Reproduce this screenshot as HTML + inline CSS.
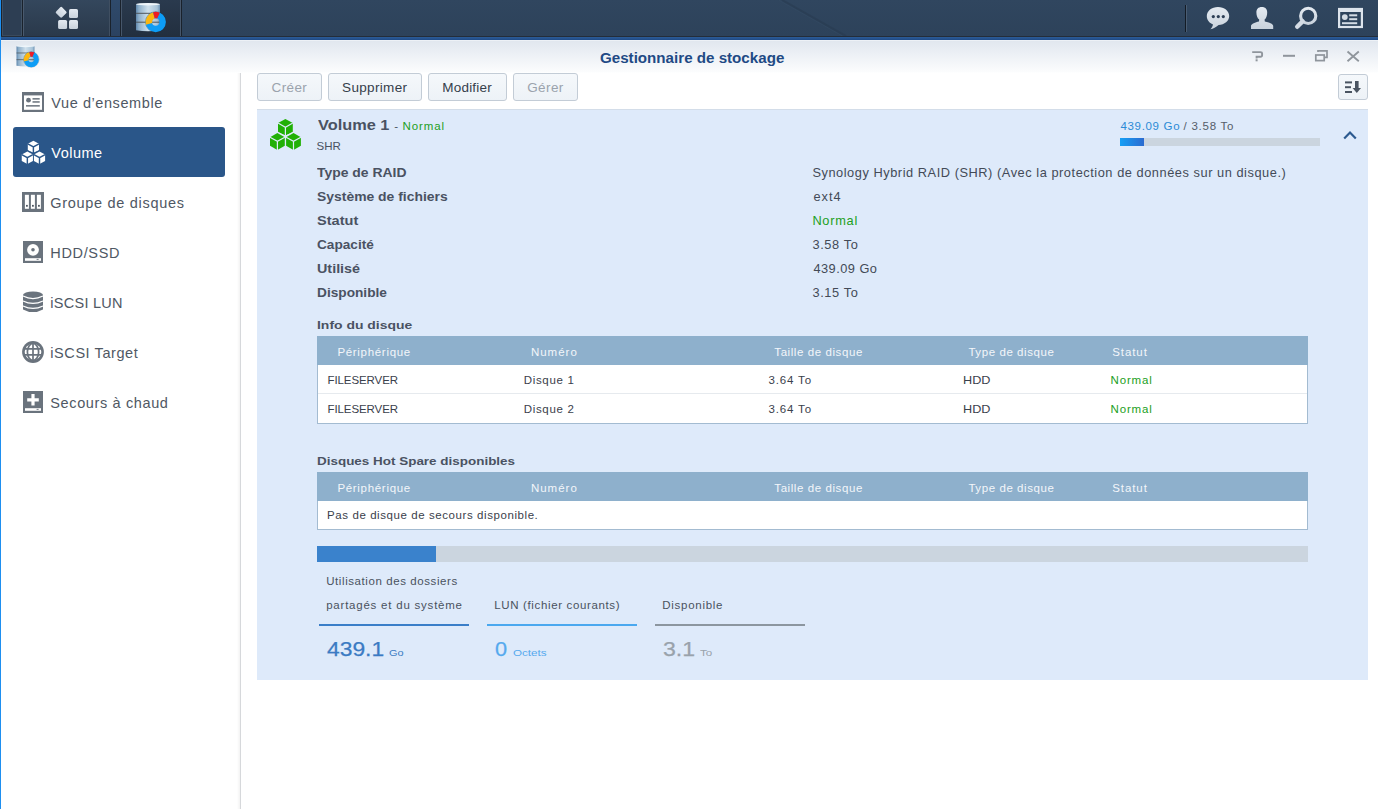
<!DOCTYPE html>
<html><head><meta charset="utf-8"><title>Gestionnaire de stockage</title>
<style>
*{margin:0;padding:0;box-sizing:border-box}
html,body{width:1378px;height:809px;overflow:hidden;background:#fff;font-family:"Liberation Sans",sans-serif}
.a{position:absolute}
.t{position:absolute;white-space:nowrap}
</style></head><body>

<div class="a" style="left:0;top:0;width:1378px;height:36px;background:linear-gradient(#30465f,#2d425a)"></div>
<svg class="a" style="left:0;top:0" width="1378" height="36"><path d="M782 0L846 36" stroke="#283a4f" stroke-width="2" opacity="0.5"/><path d="M778.5 0L842.5 36" stroke="#3a5069" stroke-width="0.8" opacity="0.4"/></svg>
<div class="a" style="left:0;top:36px;width:1378px;height:1px;background:#242d39"></div>
<div class="a" style="left:0;top:37px;width:1378px;height:3px;background:linear-gradient(#2c5c97,#1f4a86)"></div>
<div class="a" style="left:1px;top:0;width:1px;height:36px;background:#1b232d"></div>
<div class="a" style="left:2px;top:0;width:20px;height:36px;background:#2d3e53;border-left:1px solid #3f5064;border-right:1px solid #3f5266;border-bottom:1px solid #3a4a5c"></div>
<div class="a" style="left:22px;top:0;width:1px;height:36px;background:#1a222c"></div>
<div class="a" style="left:23px;top:0;width:87px;height:36px;background:linear-gradient(#34475d,#2a394b);border-left:1px solid #4a5a6e;border-right:1px solid #404f61"></div>
<div class="a" style="left:110px;top:0;width:1px;height:36px;background:#1a222c"></div>
<div class="a" style="left:111px;top:0;width:9px;height:36px;background:linear-gradient(#2f4a6b,#2b4260)"></div>
<div class="a" style="left:120px;top:0;width:1px;height:36px;background:#1a222c"></div>
<div class="a" style="left:121px;top:0;width:60px;height:36px;background:linear-gradient(#2a3a4e,#222f3f);border-left:1px solid #46566a;border-right:1px solid #46566a"></div>
<div class="a" style="left:181px;top:0;width:1px;height:36px;background:#1a222c"></div>
<div class="a" style="left:1185px;top:5px;width:1px;height:27px;background:#131b25"></div>
<div class="a" style="left:1186px;top:5px;width:1px;height:27px;background:#4a5d73"></div>
<!-- main menu icon -->
<svg class="a" style="left:52px;top:5px" width="30" height="28" viewBox="0 0 30 28">
 <defs><linearGradient id="ig" x1="0" y1="0" x2="0" y2="1"><stop offset="0" stop-color="#e4eaf1"/><stop offset="1" stop-color="#c9d2dc"/></linearGradient></defs>
 <rect x="5.2" y="3" width="8.4" height="8.4" rx="1.3" transform="rotate(45 9.1 7)" fill="url(#ig)"/>
 <rect x="17" y="3.9" width="9" height="9.2" rx="1.6" fill="url(#ig)"/>
 <rect x="6.1" y="15" width="9" height="9" rx="1.6" fill="url(#ig)"/>
 <rect x="17" y="15" width="9" height="9" rx="1.6" fill="url(#ig)"/>
</svg>
<!-- app icon taskbar -->
<svg class="a" style="left:130px;top:0px" width="42" height="36" viewBox="0 0 42 36">
 <defs>
  <linearGradient id="cylt" x1="0" y1="0" x2="1" y2="0"><stop offset="0" stop-color="#5f87ad"/><stop offset="0.12" stop-color="#8fb0cb"/><stop offset="0.5" stop-color="#cfe0ec"/><stop offset="0.88" stop-color="#a9c4d9"/><stop offset="1" stop-color="#6d93b5"/></linearGradient>
 </defs>
 <path d="M6 4.2Q18 2.6 30 4.2V30.2Q18 32.2 6 30.2Z" fill="url(#cylt)"/>
 <ellipse cx="18" cy="4.2" rx="12" ry="1.3" fill="#eef5fa"/>
 <path d="M6 13.3H30M6 22.2H30" stroke="#4f565c" stroke-width="1"/>
 <circle cx="25.7" cy="22" r="10.3" fill="none" stroke="#1b2a3a" stroke-width="0.9" opacity="0.35"/>
 <circle cx="25.7" cy="22" r="6.95" fill="none" stroke="#0d9df6" stroke-width="6.5"/>
 <path d="M19.01 23.87A6.95 6.95 0 0 1 23.90 15.29" fill="none" stroke="#fdb60f" stroke-width="6.5"/>
 <path d="M23.90 15.29A6.95 6.95 0 0 1 28.53 15.65" fill="none" stroke="#ee1c25" stroke-width="6.5"/>
</svg>
<!-- right icons -->
<svg class="a" style="left:1205px;top:5px" width="26" height="26" viewBox="0 0 26 26">
 <path d="M13 2C19.3 2 24.2 5.9 24.2 11C24.2 16 19.5 19.7 13.6 20C11 22.3 8.3 23.7 5.4 24.2C6.8 22.7 7.7 21.2 8 19.4C4.2 18 1.8 14.8 1.8 11C1.8 5.9 6.7 2 13 2Z" fill="url(#ig)"/>
 <circle cx="8.3" cy="11.6" r="1.6" fill="#2c3e55"/><circle cx="13.3" cy="11.6" r="1.6" fill="#2c3e55"/><circle cx="18.3" cy="11.6" r="1.6" fill="#2c3e55"/>
</svg>
<svg class="a" style="left:1249px;top:5px" width="26" height="26" viewBox="0 0 26 26">
 <path d="M12.8 2C16.4 2 18.2 4.2 18.2 7.4C18.2 10.6 17.2 13.2 15.6 14.6L15.8 16.4C19.6 17.2 23.8 18.6 24.2 20.8L24.2 24H2L2 20.8C2.4 18.6 6.3 17.2 10 16.4L10.2 14.6C8.5 13.2 7.4 10.6 7.4 7.4C7.4 4.2 9.2 2 12.8 2Z" fill="url(#ig)"/>
</svg>
<svg class="a" style="left:1293px;top:5px" width="26" height="26" viewBox="0 0 26 26">
 <circle cx="15.2" cy="10.9" r="7.6" fill="none" stroke="url(#ig)" stroke-width="3.1"/>
 <path d="M9.6 16.4L4.2 21.8" stroke="#d3dbe4" stroke-width="4.4" stroke-linecap="round"/>
</svg>
<svg class="a" style="left:1337px;top:6px" width="27" height="24" viewBox="0 0 27 24">
 <rect x="2.1" y="3" width="22.8" height="18" fill="none" stroke="#dde4ec" stroke-width="2.2"/>
 <rect x="1" y="2" width="25" height="4" fill="#dde4ec"/>
 <circle cx="7.8" cy="11.1" r="2.9" fill="#d3dbe4"/>
 <rect x="12.2" y="8.3" width="8" height="2" fill="#d3dbe4"/>
 <rect x="12.2" y="12.2" width="8" height="2" fill="#d3dbe4"/>
 <rect x="5" y="16.2" width="15.2" height="2" fill="#d3dbe4"/>
</svg>


<div class="a" style="left:0;top:0;width:1px;height:809px;background:#1e8ff0"></div>
<div class="a" style="left:1px;top:40px;width:1377px;height:1px;background:#edf1f6"></div>
<div class="a" style="left:1px;top:41px;width:1377px;height:32px;background:linear-gradient(#e1e7ef,#fbfcfd 95%,#fff)"></div>
<!-- window controls -->
<svg class="a" style="left:1248px;top:48px" width="120" height="16" viewBox="0 0 120 16">
 <g fill="none" stroke="#8f959c" stroke-width="1.9">
  <path d="M4.2 4.1H12.4Q14.1 4.1 14.1 5.6V7.2Q14.1 8.7 12.4 8.7H8.6V10.4"/>
 </g>
 <rect x="7.6" y="11.3" width="2" height="2" fill="#8f959c"/>
 <rect x="35" y="6.8" width="12" height="2" fill="#8f959c"/>
 <g fill="none" stroke="#8f959c" stroke-width="1.7">
  <rect x="67.8" y="7" width="8.4" height="5.6"/>
  <path d="M70 4V2.9H79V9.4H76.5"/>
 </g>
 <path d="M99.5 3.5L110.8 13.2M110.8 3.5L99.5 13.2" stroke="#8f959c" stroke-width="1.8"/>
</svg>
<svg class="a" style="left:11.9px;top:42.6px" width="31.5" height="27.0" viewBox="0 0 42 36">
 <defs>
  <linearGradient id="cylw" x1="0" y1="0" x2="1" y2="0"><stop offset="0" stop-color="#5f87ad"/><stop offset="0.12" stop-color="#8fb0cb"/><stop offset="0.5" stop-color="#cfe0ec"/><stop offset="0.88" stop-color="#a9c4d9"/><stop offset="1" stop-color="#6d93b5"/></linearGradient>
 </defs>
 <path d="M6 4.2Q18 2.6 30 4.2V30.2Q18 32.2 6 30.2Z" fill="url(#cylw)"/>
 <ellipse cx="18" cy="4.2" rx="12" ry="1.3" fill="#eef5fa"/>
 <path d="M6 13.3H30M6 22.2H30" stroke="#4f565c" stroke-width="1"/>
 <circle cx="25.7" cy="22" r="10.3" fill="none" stroke="#1b2a3a" stroke-width="0.9" opacity="0.35"/>
 <circle cx="25.7" cy="22" r="6.95" fill="none" stroke="#0d9df6" stroke-width="6.5"/>
 <path d="M19.01 23.87A6.95 6.95 0 0 1 23.90 15.29" fill="none" stroke="#fdb60f" stroke-width="6.5"/>
 <path d="M23.90 15.29A6.95 6.95 0 0 1 28.53 15.65" fill="none" stroke="#ee1c25" stroke-width="6.5"/>
</svg>
<!-- sidebar separator -->
<div class="a" style="left:237px;top:73px;width:3px;height:736px;background:linear-gradient(90deg,#fff,#f3f3f3)"></div>
<div class="a" style="left:240px;top:73px;width:1px;height:736px;background:#d6d8db"></div>
<!-- selected item -->
<div class="a" style="left:13px;top:127px;width:212px;height:50px;background:#2a5689;border-radius:3px"></div>


<svg class="a" style="left:22px;top:92px" width="22" height="20" viewBox="0 0 22 20">
 <rect x="0" y="0" width="22" height="20" fill="#6a737d"/>
 <rect x="2" y="3.4" width="18" height="14.4" fill="#fff"/>
 <circle cx="6.5" cy="8.2" r="2.4" fill="#6a737d"/>
 <rect x="10.5" y="6.1" width="7.2" height="1.5" fill="#6a737d"/>
 <rect x="10.5" y="9.2" width="7.2" height="1.5" fill="#6a737d"/>
 <rect x="4" y="13.1" width="13.8" height="1.5" fill="#6a737d"/>
</svg>
<svg class="a" style="left:21.14px;top:140.14px" width="24.95" height="24.95" viewBox="-1 -1 33 33"><path d="M15.4 0L22.8 4.1V12.7L15.4 16.799999999999997L8.0 12.7V4.1Z" fill="#fff"/><path d="M8.0 4.1L15.4 8.2L22.8 4.1M15.4 8.2V16.799999999999997" fill="none" stroke="#2a5689" stroke-width="1.9"/><path d="M-1.0 17.7L7.4 14.0L15.8 17.7" fill="none" stroke="#2a5689" stroke-width="3.04"/><path d="M7.4 14.1L14.8 18.2V26.799999999999997L7.4 30.9L0.0 26.799999999999997V18.2Z" fill="#fff"/><path d="M0.0 18.2L7.4 22.299999999999997L14.8 18.2M7.4 22.299999999999997V30.9" fill="none" stroke="#2a5689" stroke-width="1.9"/><path d="M15.100000000000001 17.7L23.5 14.0L31.9 17.7" fill="none" stroke="#2a5689" stroke-width="3.04"/><path d="M23.5 14.1L30.9 18.2V26.799999999999997L23.5 30.9L16.1 26.799999999999997V18.2Z" fill="#fff"/><path d="M16.1 18.2L23.5 22.299999999999997L30.9 18.2M23.5 22.299999999999997V30.9" fill="none" stroke="#2a5689" stroke-width="1.9"/></svg>
<svg class="a" style="left:22px;top:192px" width="22" height="20" viewBox="0 0 22 20">
 <rect x="0" y="0" width="22" height="20" fill="#6a737d"/>
 <rect x="2.9" y="2.8" width="4" height="14" fill="#fff"/>
 <rect x="8.9" y="2.8" width="4" height="14" fill="#fff"/>
 <rect x="14.9" y="2.8" width="4" height="14" fill="#fff"/>
 <rect x="4" y="12.9" width="1.8" height="1.8" fill="#4f5862"/>
 <rect x="10" y="12.9" width="1.8" height="1.8" fill="#4f5862"/>
 <rect x="16" y="12.9" width="1.8" height="1.8" fill="#4f5862"/>
</svg>
<svg class="a" style="left:23px;top:241px" width="20" height="22" viewBox="0 0 20 22">
 <rect x="0" y="0" width="20" height="22" fill="#6a737d"/>
 <circle cx="10" cy="8.8" r="5.9" fill="#fff"/>
 <circle cx="10" cy="8.8" r="1.8" fill="#6a737d"/>
 <rect x="2" y="17.2" width="16" height="2.6" fill="#fff"/>
 <rect x="13.6" y="17.9" width="2" height="0.9" fill="#6a737d"/>
</svg>
<svg class="a" style="left:22px;top:291px" width="22" height="22" viewBox="0 0 22 22">
 <path d="M1 4.2V18.4Q11 23.8 21 18.4V4.2Z" fill="#6a737d"/>
 <ellipse cx="11" cy="4" rx="10" ry="3.6" fill="#6a737d"/>
 <g fill="none" stroke="#fff" stroke-width="1.1">
  <path d="M1 5.1Q11 10.1 21 5.1M1 9.9Q11 14.9 21 9.9M1 14.9Q11 19.9 21 14.9"/>
 </g>
</svg>
<svg class="a" style="left:22px;top:341px" width="22" height="22" viewBox="0 0 22 22">
 <circle cx="11" cy="11" r="10.9" fill="#6a737d"/>
 <circle cx="11" cy="11" r="8.3" fill="#fff"/>
 <g fill="none" stroke="#6a737d" stroke-width="1.7">
  <ellipse cx="11" cy="11" rx="5.6" ry="8.6"/>
  <path d="M11 2V20M2 7.9H20M2 13.9H20"/>
 </g>
</svg>
<svg class="a" style="left:23px;top:391px" width="20" height="22" viewBox="0 0 20 22">
 <rect x="0" y="0" width="20" height="22" fill="#6a737d"/>
 <path d="M8.4 3H11.6V7.2H15.8V10.4H11.6V14.6H8.4V10.4H4.2V7.2H8.4Z" fill="#fff"/>
 <rect x="2" y="17.2" width="16" height="2.6" fill="#fff"/>
 <rect x="13.6" y="17.9" width="2" height="0.9" fill="#6a737d"/>
</svg>


<div class="a" style="left:257px;top:73px;width:65px;height:28px;background:linear-gradient(#f5f8fb,#edf2f7);border:1px solid #c3ccd6;border-radius:3px"></div><div class="a" style="left:328px;top:73px;width:94px;height:28px;background:linear-gradient(#f5f8fb,#edf2f7);border:1px solid #c3ccd6;border-radius:3px"></div><div class="a" style="left:428px;top:73px;width:79px;height:28px;background:linear-gradient(#f5f8fb,#edf2f7);border:1px solid #c3ccd6;border-radius:3px"></div><div class="a" style="left:513px;top:73px;width:65px;height:28px;background:linear-gradient(#f5f8fb,#edf2f7);border:1px solid #c3ccd6;border-radius:3px"></div>
<div class="a" style="left:1338px;top:74px;width:30px;height:26px;background:linear-gradient(#f5f8fb,#edf2f7);border:1px solid #c3ccd6;border-radius:3px"></div>
<svg class="a" style="left:1344px;top:80px" width="20" height="14" viewBox="0 0 20 14">
 <g fill="#4a5461"><rect x="1" y="1.4" width="7" height="2"/><rect x="1" y="6.2" width="6" height="2"/><rect x="1" y="11" width="7" height="2"/>
 <rect x="11" y="1" width="3.6" height="7.5"/><path d="M8.6 8H17L12.8 13Z"/></g>
</svg>
<!-- panel -->
<div class="a" style="left:257px;top:109px;width:1111px;height:571px;background:#deeafa;border-top:1px solid #d3dde9"></div>
<svg class="a" style="left:269.0px;top:117.9px" width="33" height="33" viewBox="-1 -1 33 33"><path d="M15.4 0L22.8 4.1V12.7L15.4 16.799999999999997L8.0 12.7V4.1Z" fill="#21b005"/><path d="M8.0 4.1L15.4 8.2L22.8 4.1M15.4 8.2V16.799999999999997" fill="none" stroke="#deeafa" stroke-width="1.2"/><path d="M-1.0 17.7L7.4 14.0L15.8 17.7" fill="none" stroke="#deeafa" stroke-width="1.92"/><path d="M7.4 14.1L14.8 18.2V26.799999999999997L7.4 30.9L0.0 26.799999999999997V18.2Z" fill="#21b005"/><path d="M0.0 18.2L7.4 22.299999999999997L14.8 18.2M7.4 22.299999999999997V30.9" fill="none" stroke="#deeafa" stroke-width="1.2"/><path d="M15.100000000000001 17.7L23.5 14.0L31.9 17.7" fill="none" stroke="#deeafa" stroke-width="1.92"/><path d="M23.5 14.1L30.9 18.2V26.799999999999997L23.5 30.9L16.1 26.799999999999997V18.2Z" fill="#21b005"/><path d="M16.1 18.2L23.5 22.299999999999997L30.9 18.2M23.5 22.299999999999997V30.9" fill="none" stroke="#deeafa" stroke-width="1.2"/></svg>
<div class="a" style="left:1120px;top:138px;width:200px;height:8px;background:#cbd5df"></div>
<div class="a" style="left:1120px;top:138px;width:24px;height:8px;background:linear-gradient(90deg,#159ff5,#2b6bd0)"></div>
<svg class="a" style="left:1342px;top:129px" width="16" height="12" viewBox="0 0 16 12">
 <path d="M2.2 9.6L8 3.6L13.8 9.6" fill="none" stroke="#2c5a8f" stroke-width="2.2"/>
</svg>
<!-- disk table -->
<div class="a" style="left:317px;top:336px;width:991px;height:88px;background:#fff;border:1px solid #a3bbd1;border-top:none"></div>
<div class="a" style="left:317px;top:336px;width:991px;height:29px;background:#8eb0cc"></div>
<div class="a" style="left:318px;top:393px;width:989px;height:1px;background:#e6eaee"></div>
<!-- hot spare table -->
<div class="a" style="left:317px;top:472px;width:991px;height:58px;background:#fff;border:1px solid #a3bbd1;border-top:none"></div>
<div class="a" style="left:317px;top:472px;width:991px;height:29px;background:#8eb0cc"></div>
<!-- usage bar -->
<div class="a" style="left:317px;top:546px;width:991px;height:16px;background:#cbd5df"></div>
<div class="a" style="left:317px;top:546px;width:119px;height:16px;background:#3a82cc"></div>
<div class="a" style="left:319px;top:624px;width:150px;height:2px;background:#3a7ec8"></div>
<div class="a" style="left:487px;top:624px;width:150px;height:2px;background:#4aa8ef"></div>
<div class="a" style="left:655px;top:624px;width:150px;height:2px;background:#8c969f"></div>

<div class="t" style="left:599.6px;top:51.67px;font-size:13.8px;line-height:13.8px;font-weight:700;color:#1f4a85;transform:scaleX(1.0976);transform-origin:0 0;">Gestionnaire de stockage</div>
<div class="t" style="left:51.3px;top:95.88px;font-size:14.5px;line-height:14.5px;font-weight:400;color:#4f5864;letter-spacing:0.577px">Vue d’ensemble</div>
<div class="t" style="left:51.3px;top:145.88px;font-size:14.5px;line-height:14.5px;font-weight:400;color:#ffffff;letter-spacing:0.5px">Volume</div>
<div class="t" style="left:50.3px;top:195.88px;font-size:14.5px;line-height:14.5px;font-weight:400;color:#4f5864;letter-spacing:0.7px">Groupe de disques</div>
<div class="t" style="left:50.3px;top:245.88px;font-size:14.5px;line-height:14.5px;font-weight:400;color:#4f5864;letter-spacing:0.65px">HDD/SSD</div>
<div class="t" style="left:50.3px;top:295.88px;font-size:14.5px;line-height:14.5px;font-weight:400;color:#4f5864;letter-spacing:0.263px">iSCSI LUN</div>
<div class="t" style="left:50.3px;top:345.88px;font-size:14.5px;line-height:14.5px;font-weight:400;color:#4f5864;letter-spacing:0.573px">iSCSI Target</div>
<div class="t" style="left:50.3px;top:395.88px;font-size:14.5px;line-height:14.5px;font-weight:400;color:#4f5864;letter-spacing:0.629px">Secours à chaud</div>
<div class="t" style="left:271.5px;top:80.92px;font-size:13.5px;line-height:13.5px;font-weight:400;color:#9ba3ad;letter-spacing:0.4px">Créer</div>
<div class="t" style="left:342.1px;top:80.92px;font-size:13.5px;line-height:13.5px;font-weight:400;color:#353e4b;letter-spacing:0.325px">Supprimer</div>
<div class="t" style="left:442.2px;top:80.92px;font-size:13.5px;line-height:13.5px;font-weight:400;color:#353e4b;letter-spacing:0.229px">Modifier</div>
<div class="t" style="left:527.2px;top:80.92px;font-size:13.5px;line-height:13.5px;font-weight:400;color:#9ba3ad;letter-spacing:0.4px">Gérer</div>
<div class="t" style="left:317.9px;top:118.1px;font-size:14px;line-height:14px;font-weight:700;color:#4a5262;transform:scaleX(1.1656);transform-origin:0 0;">Volume 1</div>
<div class="t" style="left:394.3px;top:121.02px;font-size:11.5px;line-height:11.5px;font-weight:400;color:#4a5262;letter-spacing:0px">-</div>
<div class="t" style="left:402.6px;top:121.02px;font-size:11.5px;line-height:11.5px;font-weight:400;color:#22a022;letter-spacing:0.88px">Normal</div>
<div class="t" style="left:316.4px;top:140.52px;font-size:11.5px;line-height:11.5px;font-weight:400;color:#4a5262;letter-spacing:0.1px">SHR</div>
<div class="t" style="left:1120.4px;top:121.02px;font-size:11.5px;line-height:11.5px;font-weight:400;color:#2b8ad6;letter-spacing:0.688px">439.09 Go</div>
<div class="t" style="left:1183.5px;top:121.02px;font-size:11.5px;line-height:11.5px;font-weight:400;color:#555d69;letter-spacing:0.762px">/ 3.58 To</div>
<div class="t" style="left:317.2px;top:167.11px;font-size:12.8px;line-height:12.8px;font-weight:700;color:#4a5262;transform:scaleX(1.0878);transform-origin:0 0;">Type de RAID</div>
<div class="t" style="left:317.11px;top:191.11px;font-size:12.8px;line-height:12.8px;font-weight:700;color:#4a5262;transform:scaleX(1.0874);transform-origin:0 0;">Système de fichiers</div>
<div class="t" style="left:317.06px;top:215.11px;font-size:12.8px;line-height:12.8px;font-weight:700;color:#4a5262;transform:scaleX(1.1371);transform-origin:0 0;">Statut</div>
<div class="t" style="left:317.2px;top:239.11px;font-size:12.8px;line-height:12.8px;font-weight:700;color:#4a5262;transform:scaleX(1.0642);transform-origin:0 0;">Capacité</div>
<div class="t" style="left:317.08px;top:263.11px;font-size:12.8px;line-height:12.8px;font-weight:700;color:#4a5262;transform:scaleX(1.1216);transform-origin:0 0;">Utilisé</div>
<div class="t" style="left:316.93px;top:287.11px;font-size:12.8px;line-height:12.8px;font-weight:700;color:#4a5262;transform:scaleX(1.0688);transform-origin:0 0;">Disponible</div>
<div class="t" style="left:812.4px;top:167.11px;font-size:12.8px;line-height:12.8px;font-weight:400;color:#434a57;letter-spacing:0.542px">Synology Hybrid RAID (SHR) (Avec la protection de données sur un disque.)</div>
<div class="t" style="left:813.4px;top:191.11px;font-size:12.8px;line-height:12.8px;font-weight:400;color:#434a57;letter-spacing:1.033px">ext4</div>
<div class="t" style="left:812.4px;top:215.11px;font-size:12.8px;line-height:12.8px;font-weight:400;color:#22a022;letter-spacing:0.72px">Normal</div>
<div class="t" style="left:812.4px;top:239.11px;font-size:12.8px;line-height:12.8px;font-weight:400;color:#434a57;letter-spacing:0.633px">3.58 To</div>
<div class="t" style="left:813.4px;top:263.11px;font-size:12.8px;line-height:12.8px;font-weight:400;color:#434a57;letter-spacing:0.475px">439.09 Go</div>
<div class="t" style="left:812.4px;top:287.11px;font-size:12.8px;line-height:12.8px;font-weight:400;color:#434a57;letter-spacing:0.633px">3.15 To</div>
<div class="t" style="left:316.82px;top:320.16px;font-size:11.8px;line-height:11.8px;font-weight:700;color:#4a5262;transform:scaleX(1.181);transform-origin:0 0;">Info du disque</div>
<div class="t" style="left:337.4px;top:346.62px;font-size:11.5px;line-height:11.5px;font-weight:400;color:#f3f6fa;letter-spacing:0.691px">Périphérique</div>
<div class="t" style="left:530.9px;top:346.62px;font-size:11.5px;line-height:11.5px;font-weight:400;color:#f3f6fa;letter-spacing:1.0px">Numéro</div>
<div class="t" style="left:774.3px;top:346.62px;font-size:11.5px;line-height:11.5px;font-weight:400;color:#f3f6fa;letter-spacing:0.58px">Taille de disque</div>
<div class="t" style="left:968.4px;top:346.62px;font-size:11.5px;line-height:11.5px;font-weight:400;color:#f3f6fa;letter-spacing:0.577px">Type de disque</div>
<div class="t" style="left:1112.2px;top:346.62px;font-size:11.5px;line-height:11.5px;font-weight:400;color:#f3f6fa;letter-spacing:0.92px">Statut</div>
<div class="t" style="left:327.5px;top:374.62px;font-size:11.5px;line-height:11.5px;font-weight:400;color:#3a414c;letter-spacing:-0.089px">FILESERVER</div>
<div class="t" style="left:523.7px;top:374.62px;font-size:11.5px;line-height:11.5px;font-weight:400;color:#3a414c;letter-spacing:0.671px">Disque 1</div>
<div class="t" style="left:768.4px;top:374.62px;font-size:11.5px;line-height:11.5px;font-weight:400;color:#3a414c;letter-spacing:0.867px">3.64 To</div>
<div class="t" style="left:963.2px;top:374.62px;font-size:11.5px;line-height:11.5px;font-weight:400;color:#3a414c;transform:scaleX(1.1);transform-origin:0 0;">HDD</div>
<div class="t" style="left:1110.5px;top:374.62px;font-size:11.5px;line-height:11.5px;font-weight:400;color:#22a022;letter-spacing:0.86px">Normal</div>
<div class="t" style="left:327.5px;top:403.62px;font-size:11.5px;line-height:11.5px;font-weight:400;color:#3a414c;letter-spacing:-0.089px">FILESERVER</div>
<div class="t" style="left:523.7px;top:403.62px;font-size:11.5px;line-height:11.5px;font-weight:400;color:#3a414c;letter-spacing:0.671px">Disque 2</div>
<div class="t" style="left:768.4px;top:403.62px;font-size:11.5px;line-height:11.5px;font-weight:400;color:#3a414c;letter-spacing:0.867px">3.64 To</div>
<div class="t" style="left:963.2px;top:403.62px;font-size:11.5px;line-height:11.5px;font-weight:400;color:#3a414c;transform:scaleX(1.1);transform-origin:0 0;">HDD</div>
<div class="t" style="left:1110.5px;top:403.62px;font-size:11.5px;line-height:11.5px;font-weight:400;color:#22a022;letter-spacing:0.86px">Normal</div>
<div class="t" style="left:316.86px;top:455.96px;font-size:11.8px;line-height:11.8px;font-weight:700;color:#4a5262;transform:scaleX(1.1401);transform-origin:0 0;">Disques Hot Spare disponibles</div>
<div class="t" style="left:337.4px;top:482.62px;font-size:11.5px;line-height:11.5px;font-weight:400;color:#f3f6fa;letter-spacing:0.691px">Périphérique</div>
<div class="t" style="left:530.9px;top:482.62px;font-size:11.5px;line-height:11.5px;font-weight:400;color:#f3f6fa;letter-spacing:1.0px">Numéro</div>
<div class="t" style="left:774.3px;top:482.62px;font-size:11.5px;line-height:11.5px;font-weight:400;color:#f3f6fa;letter-spacing:0.58px">Taille de disque</div>
<div class="t" style="left:968.4px;top:482.62px;font-size:11.5px;line-height:11.5px;font-weight:400;color:#f3f6fa;letter-spacing:0.577px">Type de disque</div>
<div class="t" style="left:1112.2px;top:482.62px;font-size:11.5px;line-height:11.5px;font-weight:400;color:#f3f6fa;letter-spacing:0.92px">Statut</div>
<div class="t" style="left:327.1px;top:510.22px;font-size:11.5px;line-height:11.5px;font-weight:400;color:#3a414c;letter-spacing:0.577px">Pas de disque de secours disponible.</div>
<div class="t" style="left:326.2px;top:576.22px;font-size:11.5px;line-height:11.5px;font-weight:400;color:#4a525e;letter-spacing:0.583px">Utilisation des dossiers</div>
<div class="t" style="left:326.2px;top:600.22px;font-size:11.5px;line-height:11.5px;font-weight:400;color:#4a525e;letter-spacing:0.776px">partagés et du système</div>
<div class="t" style="left:494.3px;top:600.22px;font-size:11.5px;line-height:11.5px;font-weight:400;color:#4a525e;letter-spacing:0.638px">LUN (fichier courants)</div>
<div class="t" style="left:662.3px;top:600.22px;font-size:11.5px;line-height:11.5px;font-weight:400;color:#4a525e;letter-spacing:0.722px">Disponible</div>
<div class="t" style="left:327.2px;top:638.5px;font-size:20.5px;line-height:20.5px;font-weight:400;color:#3b7bc3;transform:scaleX(1.1137);transform-origin:0 0;-webkit-text-stroke:0.25px currentColor">439.1</div>
<div class="t" style="left:389.3px;top:648.68px;font-size:9.3px;line-height:9.3px;font-weight:400;color:#3b7bc3;transform:scaleX(1.175);transform-origin:0 0;">Go</div>
<div class="t" style="left:494.94px;top:638.5px;font-size:20.5px;line-height:20.5px;font-weight:400;color:#55a9ee;transform:scaleX(1.06);transform-origin:0 0;-webkit-text-stroke:0.25px currentColor">0</div>
<div class="t" style="left:512.8px;top:648.68px;font-size:9.3px;line-height:9.3px;font-weight:400;color:#55a9ee;transform:scaleX(1.2519);transform-origin:0 0;">Octets</div>
<div class="t" style="left:662.67px;top:638.5px;font-size:20.5px;line-height:20.5px;font-weight:400;color:#99a2ab;transform:scaleX(1.1259);transform-origin:0 0;-webkit-text-stroke:0.25px currentColor">3.1</div>
<div class="t" style="left:700.0px;top:648.68px;font-size:9.3px;line-height:9.3px;font-weight:400;color:#99a2ab;transform:scaleX(1.25);transform-origin:0 0;">To</div>
</body></html>
